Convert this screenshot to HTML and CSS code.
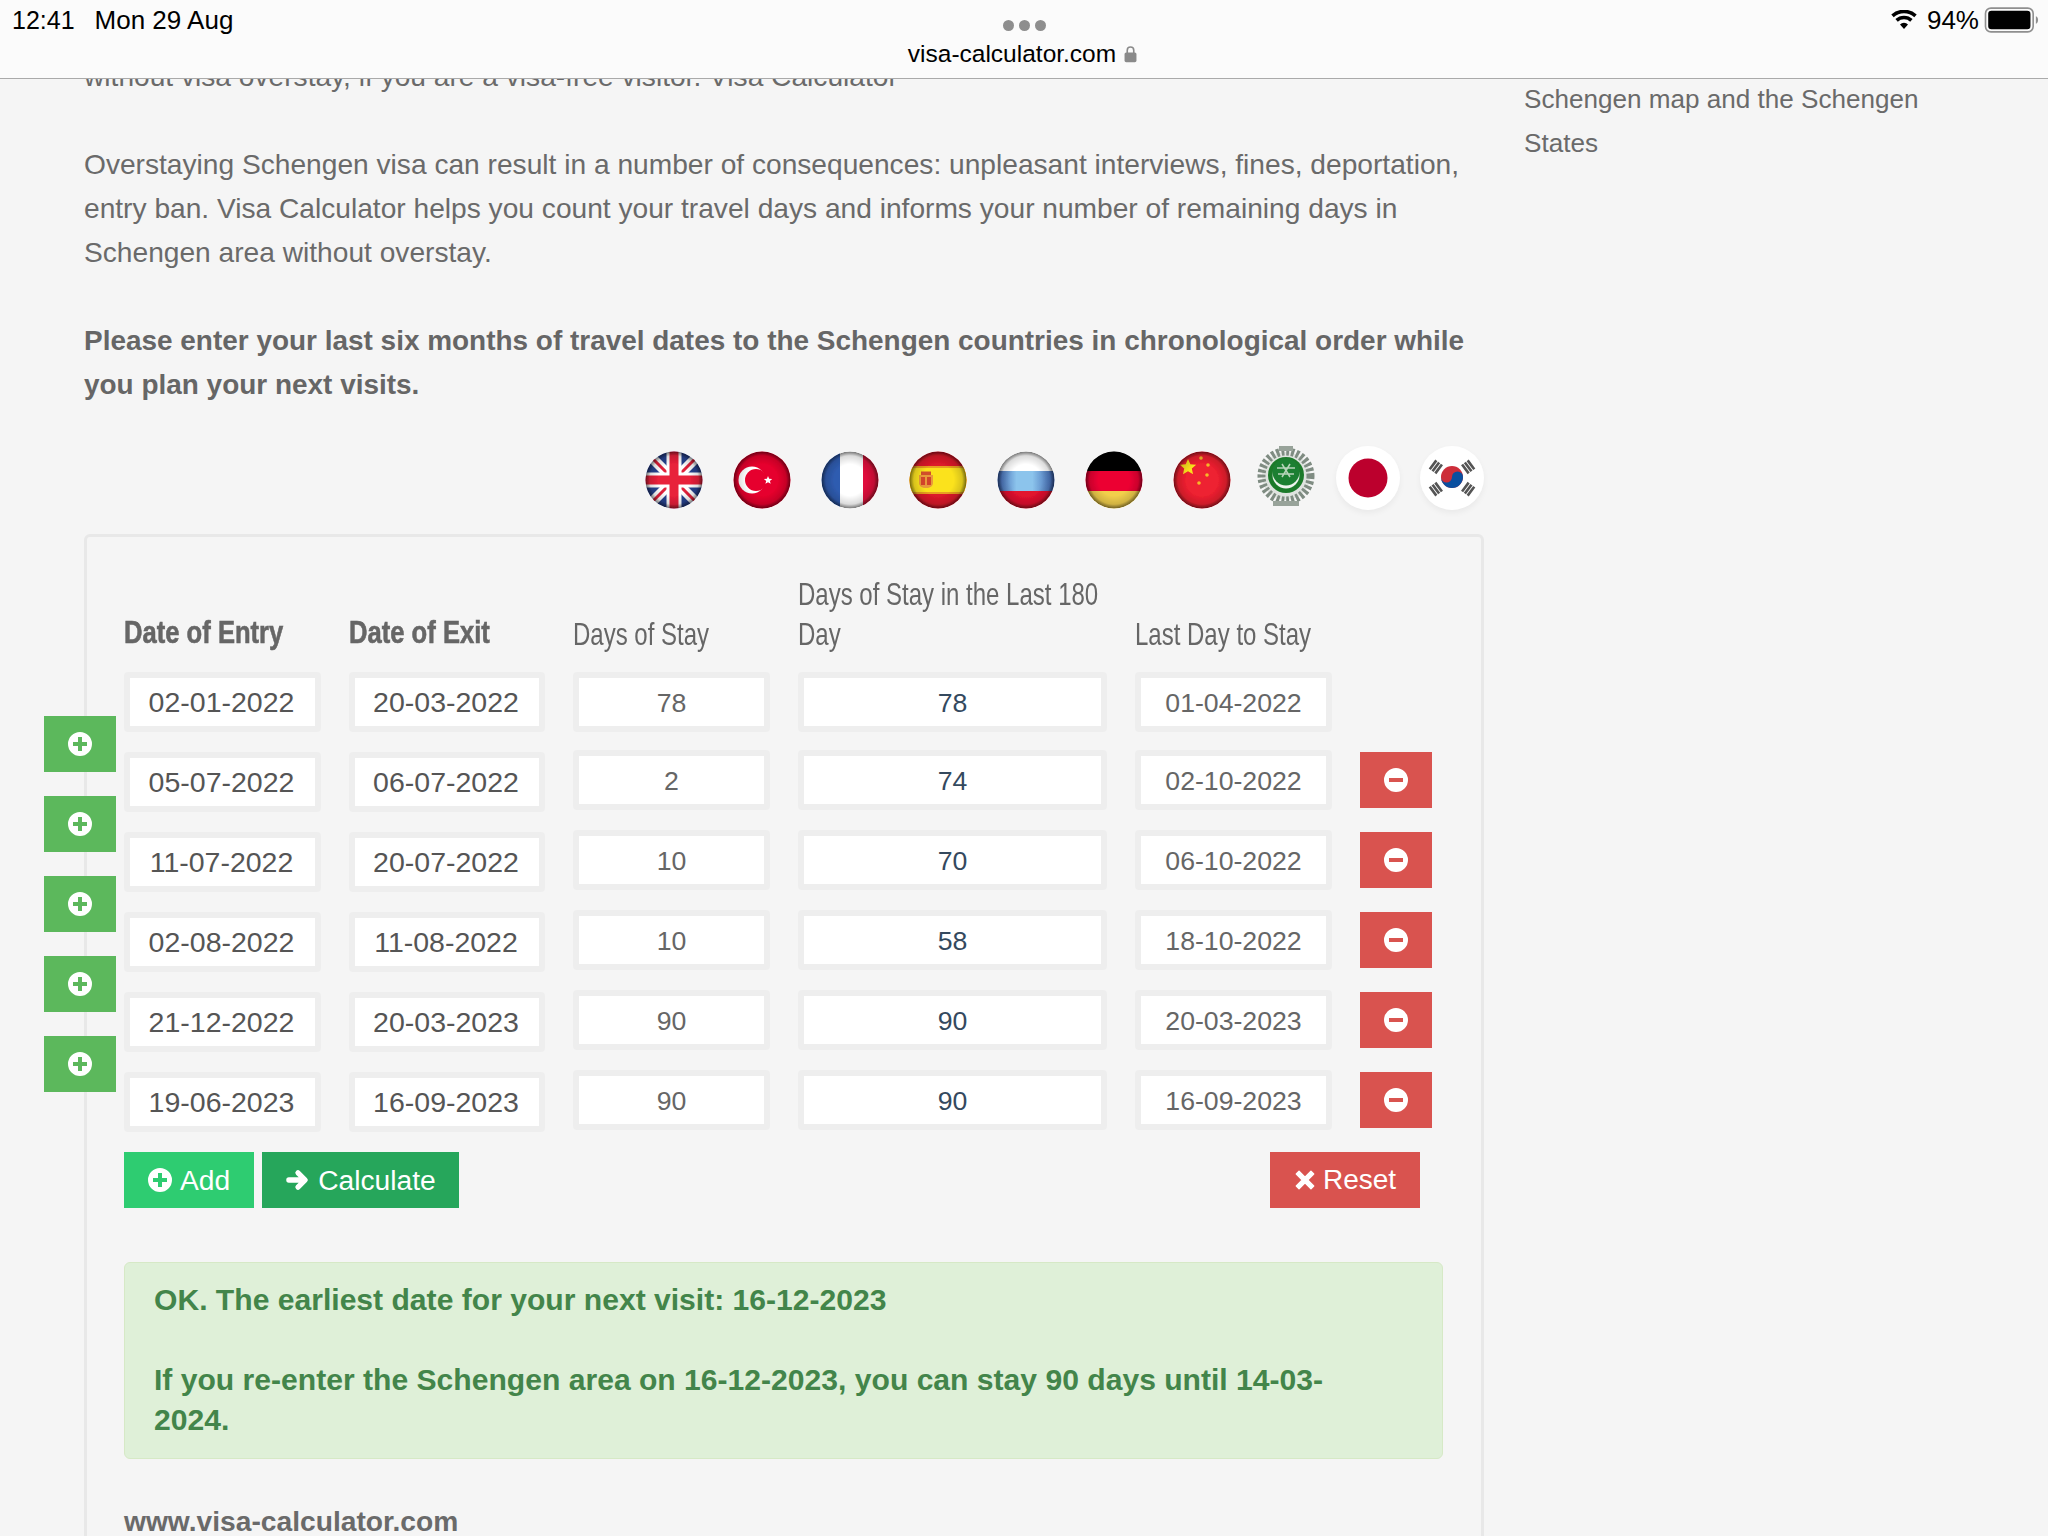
FILE: index.html
```html
<!DOCTYPE html>
<html lang="en">
<head>
<meta charset="utf-8">
<title>Visa Calculator</title>
<link rel="stylesheet" href="styles.css">
</head>
<body>
<svg class="defs" width="0" height="0" aria-hidden="true">
  <defs>
    <clipPath id="disc"><circle cx="32" cy="32" r="28.5"/></clipPath>
    <radialGradient id="shade" cx="50%" cy="50%" r="50%">
      <stop offset="0.55" stop-color="#000" stop-opacity="0"/>
      <stop offset="0.85" stop-color="#000" stop-opacity="0.14"/>
      <stop offset="1" stop-color="#000" stop-opacity="0.55"/>
    </radialGradient>
    <linearGradient id="ru-blue" x1="0" x2="1" y1="0" y2="0">
      <stop offset="0" stop-color="#2c4fa3"/><stop offset="0.35" stop-color="#8cc4ec"/><stop offset="0.6" stop-color="#8cc4ec"/><stop offset="1" stop-color="#2c4fa3"/>
    </linearGradient>
    <filter id="soft"><feGaussianBlur stdDeviation="0.45"/></filter>
    <symbol id="i-plus" viewBox="0 0 24 24"><path fill-rule="evenodd" d="M12 0a12 12 0 1 0 0 24a12 12 0 0 0 0-24zM10 5h4v5h5v4h-5v5h-4v-5H5v-4h5z"/></symbol>
    <symbol id="i-minus" viewBox="0 0 24 24"><path fill-rule="evenodd" d="M12 0a12 12 0 1 0 0 24a12 12 0 0 0 0-24zM5 10h14v4H5z"/></symbol>
  </defs>
</svg>

<header class="topbar">
  <div class="status-left"><span>12:41</span><span class="status-date">Mon 29 Aug</span></div>
  <div class="address">
    <div class="dots"><i></i><i></i><i></i></div>
    <div class="url">visa-calculator.com
      <svg class="lock" viewBox="0 0 12 16"><path d="M3 7V4.500a3 3 0 0 1 6 0V7" fill="none" stroke="#8a8a8a" stroke-width="1.500"/><rect x="0.500" y="6.500" width="11" height="9" rx="1.500" fill="#8a8a8a"/></svg>
    </div>
  </div>
  <div class="status-right">
    <svg class="wifi" viewBox="0 0 26 20"><path d="M13 19l-4-4.600a5.600 5.600 0 0 1 8 0zM6.800 11.800l-2.400-2.700a12.600 12.600 0 0 1 17.200 0l-2.400 2.700a9 9 0 0 0-12.400 0zM2.700 7.200L.3 4.500a19 19 0 0 1 25.400 0l-2.400 2.700a15.500 15.500 0 0 0-20.600 0z" fill="#000"/></svg>
    <span>94%</span>
    <svg class="battery" viewBox="0 0 50 24"><rect x="1" y="1" width="44" height="22" rx="5" fill="none" stroke="#8f8f8f" stroke-width="1.500"/><rect x="3.500" y="3.500" width="39" height="17" rx="3" fill="#000"/><path d="M47.500 8.500c1.500.5 2 2 2 3.500s-.5 3-2 3.500z" fill="#8f8f8f"/></svg>
  </div>
</header>

<div class="page">
  <main class="content">
    <p class="copy">without visa overstay, if you are a visa-free visitor. Visa Calculator<br><br>Overstaying Schengen visa can result in a number of consequences: unpleasant interviews, fines, deportation, entry ban. Visa Calculator helps you count your travel days and informs your number of remaining days in Schengen area without overstay.<br><br><strong>Please enter your last six months of travel dates to the Schengen countries in chronological order while you plan your next visits.</strong></p>

    <div class="flags">
      <svg class="flag" viewBox="0 0 64 64"><g filter="url(#soft)"><g clip-path="url(#disc)"><rect width="64" height="64" fill="#27428f"/><path d="M0 0L64 64M64 0L0 64" stroke="#fff" stroke-width="10"/><path d="M0 0L64 64M64 0L0 64" stroke="#e0203a" stroke-width="3"/><path d="M32 0V64M0 32H64" stroke="#fff" stroke-width="15"/><path d="M32 0V64M0 32H64" stroke="#e8203a" stroke-width="9"/><circle cx="32" cy="32" r="28.500" fill="url(#shade)"/></g></g></svg>
      <svg class="flag" viewBox="0 0 64 64"><g filter="url(#soft)"><g clip-path="url(#disc)"><rect width="64" height="64" fill="#e6002d"/><circle cx="22" cy="32" r="13.500" fill="#fff"/><circle cx="26" cy="32" r="11" fill="#e6002d"/><path d="M38 28l1.200 2.800 3 .2-2.300 1.900.8 2.900-2.700-1.600-2.600 1.600.8-2.900-2.300-1.900 3-.2z" fill="#fff"/><circle cx="32" cy="32" r="28.500" fill="url(#shade)"/></g></g></svg>
      <svg class="flag" viewBox="0 0 64 64"><g filter="url(#soft)"><g clip-path="url(#disc)"><rect width="64" height="64" fill="#fff"/><rect width="19" height="64" x="3" fill="#2f5cb0"/><rect width="22" height="64" x="45" fill="#e0113c"/><circle cx="32" cy="32" r="28.500" fill="url(#shade)"/></g></g></svg>
      <svg class="flag" viewBox="0 0 64 64"><g filter="url(#soft)"><g clip-path="url(#disc)"><rect width="64" height="64" fill="#dc1a2a"/><rect y="18" width="64" height="28" fill="#e8a020"/><rect y="20" width="64" height="24" fill="#fbe21f"/><path d="M13 27h14v8c0 3-3 5-7 5s-7-2-7-5z" fill="#e89a3a"/><rect x="15" y="23.500" width="10" height="3.500" fill="#d0502c"/><path d="M15 29h4v8h-4zM21 29h4v8h-4z" fill="#d2452c"/><circle cx="32" cy="32" r="28.500" fill="url(#shade)"/></g></g></svg>
      <svg class="flag" viewBox="0 0 64 64"><g filter="url(#soft)"><g clip-path="url(#disc)"><rect width="64" height="64" fill="#fff"/><rect y="23" width="64" height="20" fill="url(#ru-blue)"/><rect y="43" width="64" height="21" fill="#e2122f"/><circle cx="32" cy="32" r="28.500" fill="url(#shade)"/></g></g></svg>
      <svg class="flag" viewBox="0 0 64 64"><g filter="url(#soft)"><g clip-path="url(#disc)"><rect width="64" height="23" fill="#000"/><rect y="23" width="64" height="20" fill="#ec0033"/><rect y="43" width="64" height="21" fill="#f2cf4c"/><circle cx="32" cy="32" r="28.500" fill="url(#shade)"/></g></g></svg>
      <svg class="flag" viewBox="0 0 64 64"><g filter="url(#soft)"><g clip-path="url(#disc)"><rect width="64" height="64" fill="#ee2030"/><path d="M18 11l2.400 5.300 5.800.5-4.400 3.800 1.300 5.600-5.100-2.900-5 3 1.200-5.700-4.300-3.900 5.800-.5z" fill="#fbe21f"/><g fill="#f6b82a"><circle cx="31" cy="10" r="1.800"/><circle cx="38" cy="17" r="1.800"/><circle cx="37" cy="27" r="1.800"/><circle cx="29" cy="35" r="1.800"/></g><circle cx="32" cy="32" r="28.500" fill="url(#shade)"/></g></g></svg>
      <svg class="flag flag-arab" viewBox="0 0 60 60"><g filter="url(#soft)"><circle cx="30" cy="30" r="24" fill="#dfe3df"/><circle cx="30" cy="30" r="24.500" fill="none" stroke="#7f8c82" stroke-width="8" stroke-dasharray="3 2"/><rect x="23" y="0" width="14" height="5" fill="#98a39a"/><rect x="17" y="55" width="26" height="5" fill="#98a39a"/><circle cx="30" cy="29" r="18" fill="#1b7a2b"/><circle cx="30" cy="29" r="13.500" fill="#eef3ee"/><circle cx="30" cy="26" r="13.500" fill="#1f7f33"/><path d="M21 22h18M22 28h16M26 18l8 13M34 18l-8 13" stroke="#b7d4ba" stroke-width="1.500" fill="none"/></g></svg>
      <svg class="flag flag-plain" viewBox="0 0 64 64"><circle cx="32" cy="32" r="19.500" fill="#bc002d"/></svg>
      <svg class="flag flag-plain" viewBox="0 0 64 64"><circle cx="32" cy="31" r="11" fill="#cd2e3a"/><path d="M21 31a5.500 5.500 0 0 0 11 0a5.500 5.500 0 0 1 11 0a11 11 0 0 1-22 0z" fill="#0a4fa0"/><g stroke="#555" stroke-width="11" stroke-dasharray="2.600 .9" fill="none"><path d="M12 18L20 24"/><path d="M52 18L44 24"/><path d="M12 46L20 40"/><path d="M52 46L44 40"/></g></svg>
    </div>

    <section class="panel">
      <div class="side-adds">
        <button class="side-add"><svg class="icon"><use href="#i-plus"/></svg></button>
        <button class="side-add"><svg class="icon"><use href="#i-plus"/></svg></button>
        <button class="side-add"><svg class="icon"><use href="#i-plus"/></svg></button>
        <button class="side-add"><svg class="icon"><use href="#i-plus"/></svg></button>
        <button class="side-add"><svg class="icon"><use href="#i-plus"/></svg></button>
      </div>

      <div class="grid">
        <div class="th th-bold"><span>Date of Entry</span></div>
        <div class="th th-bold"><span>Date of Exit</span></div>
        <div class="th"><span>Days of Stay</span></div>
        <div class="th"><span>Days of Stay in the Last 180 Day</span></div>
        <div class="th"><span>Last Day to Stay</span></div>
        <div class="th"></div>

        <div class="cell first"><div class="field date">02-01-2022</div></div>
        <div class="cell first"><div class="field date">20-03-2022</div></div>
        <div class="cell first"><div class="field">78</div></div>
        <div class="cell first"><div class="field total">78</div></div>
        <div class="cell first"><div class="field">01-04-2022</div></div>
        <div class="cell first"></div>

        <div class="cell low"><div class="field date">05-07-2022</div></div>
        <div class="cell low"><div class="field date">06-07-2022</div></div>
        <div class="cell"><div class="field">2</div></div>
        <div class="cell"><div class="field total">74</div></div>
        <div class="cell"><div class="field">02-10-2022</div></div>
        <div class="cell low"><button class="remove"><svg class="icon"><use href="#i-minus"/></svg></button></div>

        <div class="cell low"><div class="field date">11-07-2022</div></div>
        <div class="cell low"><div class="field date">20-07-2022</div></div>
        <div class="cell"><div class="field">10</div></div>
        <div class="cell"><div class="field total">70</div></div>
        <div class="cell"><div class="field">06-10-2022</div></div>
        <div class="cell low"><button class="remove"><svg class="icon"><use href="#i-minus"/></svg></button></div>

        <div class="cell low"><div class="field date">02-08-2022</div></div>
        <div class="cell low"><div class="field date">11-08-2022</div></div>
        <div class="cell"><div class="field">10</div></div>
        <div class="cell"><div class="field total">58</div></div>
        <div class="cell"><div class="field">18-10-2022</div></div>
        <div class="cell low"><button class="remove"><svg class="icon"><use href="#i-minus"/></svg></button></div>

        <div class="cell low"><div class="field date">21-12-2022</div></div>
        <div class="cell low"><div class="field date">20-03-2023</div></div>
        <div class="cell"><div class="field">90</div></div>
        <div class="cell"><div class="field total">90</div></div>
        <div class="cell"><div class="field">20-03-2023</div></div>
        <div class="cell low"><button class="remove"><svg class="icon"><use href="#i-minus"/></svg></button></div>

        <div class="cell low"><div class="field date">19-06-2023</div></div>
        <div class="cell low"><div class="field date">16-09-2023</div></div>
        <div class="cell"><div class="field">90</div></div>
        <div class="cell"><div class="field total">90</div></div>
        <div class="cell"><div class="field">16-09-2023</div></div>
        <div class="cell low"><button class="remove"><svg class="icon"><use href="#i-minus"/></svg></button></div>
      </div>

      <div class="actions">
        <button class="btn btn-add"><svg class="icon"><use href="#i-plus"/></svg>Add</button>
        <button class="btn btn-calc"><svg class="icon icon-arrow" viewBox="0 0 24 24"><path d="M3 12H19M12.500 4.500L20 12l-7.500 7.500" fill="none" stroke="#fff" stroke-width="5.500" stroke-linecap="round" stroke-linejoin="round"/></svg>Calculate</button>
        <button class="btn btn-reset"><svg class="icon icon-x" viewBox="0 0 24 24"><path d="M5.500 2.500L12 9l6.500-6.500 3 3L15 12l6.500 6.500-3 3L12 15l-6.500 6.500-3-3L9 12 2.500 5.500z" stroke="#fff" stroke-width="1.500" stroke-linejoin="round"/></svg>Reset</button>
      </div>

      <div class="alert">OK. The earliest date for your next visit: 16-12-2023<br><br>If you re-enter the Schengen area on 16-12-2023, you can stay 90 days until 14-03-<br>2024.</div>

      <p class="site">www.visa-calculator.com</p>
    </section>
  </main>

  <aside class="sidebar">Schengen map and the Schengen States</aside>
</div>
</body>
</html>
```

FILE: styles.css
```css
* { box-sizing: border-box; }
html, body { margin: 0; height: 1536px; overflow: hidden; }
body { background: #f5f5f5; color: #6a6a6a; font-family: "Liberation Sans", Arial, sans-serif; font-size: 26.67px; line-height: 44px; position: relative; }
.defs { display: block; width: 0; height: 0; }

.topbar { position: absolute; left: 0; top: 0; width: 2048px; height: 79px; background: #fbfbfb; border-bottom: 1px solid #aaa; color: #000; z-index: 5; display: flex; justify-content: space-between; font-size: 25px; line-height: 30px; }
.status-left { display: flex; gap: 20px; padding: 5px 0 0 12px; }
.status-date { font-size: 26px; }
.status-right { display: flex; align-items: flex-start; padding: 5px 9px 0 0; gap: 5px; font-size: 26px; }
.address { position: absolute; left: 0; right: 0; top: 18px; display: flex; flex-direction: column; align-items: center; font-size: 24.5px; }
.dots { display: flex; gap: 5px; height: 18px; padding-top: 2px; }
.dots i { width: 11px; height: 11px; border-radius: 50%; background: #8e8e8e; display: block; }
.url { line-height: 36px; display: flex; align-items: center; gap: 8px; padding-right: 3px; }
.lock { width: 13px; height: 18px; }
.wifi { width: 26px; height: 20px; margin: 5px 5px 0 0; }
.battery { width: 55px; height: 26px; margin-top: 2px; }

.page { display: flex; padding-left: 84px; }
.content { width: 1400px; flex: none; padding-top: 55px; }
.copy { margin: 0; font-size: 28.15px; }
.copy strong { font-size: 27.95px; color: #666; }
.sidebar { width: 420px; margin: 77px 0 0 40px; font-size: 26.1px; }

.flags { display: flex; justify-content: flex-end; gap: 20px; margin-top: 39px; height: 88px; }
.flag { width: 64px; height: 64px; margin: 2px 4px 0 0; flex: none; }
.flag-arab { width: 60px; height: 60px; margin: 0 0 0 -2px; }
.flag-plain { background: #fff; border-radius: 50%; margin: 0; box-shadow: 0 3px 6px rgba(0,0,0,.05); }

.panel { position: relative; height: 1100px; border: 3px solid #e8e8e8; border-radius: 6px 6px 0 0; padding: 37px 38px 0 37px; }
.side-adds { position: absolute; left: -43px; top: 179px; display: flex; flex-direction: column; gap: 24px; }
.side-add { width: 72px; height: 56px; border: 0; padding: 0; background: #5cb85c; color: #fff; display: flex; align-items: center; justify-content: center; }
.icon { width: 24px; height: 24px; fill: currentColor; flex: none; }
.icon-arrow { width: 23px; }
.icon-x { width: 22px; height: 22px; }

.grid { display: grid; grid-template-columns: 197px 196px 197px 309px 197px 72px; column-gap: 28px; }
.th { font-size: 32px; line-height: 40px; color: #666; align-self: end; padding-bottom: 18px; }
.th span { display: block; width: 133.3%; transform: scaleX(.75); transform-origin: left center; }
.th-bold { font-weight: 700; padding-bottom: 20px; -webkit-text-stroke: .6px #666; }
.th-bold span { width: 125%; transform: scaleX(.8); }
.cell { height: 80px; }
.cell.first { height: 78px; }
.cell.low { padding-top: 2px; }
.field { height: 60px; border: 6px solid #eee; border-radius: 4px; background: #fff; background-clip: padding-box; text-align: center; line-height: 50px; font-size: 26.67px; color: #666; }
.date { font-size: 28.5px; color: #555; line-height: 48px; padding-right: 2px; }
.total { color: #34495e; }
.remove { width: 72px; height: 56px; border: 0; padding: 0; background: #d9534f; color: #fff; display: flex; align-items: center; justify-content: center; }

.actions { display: flex; gap: 8px; margin: 2px 23px 0 0; }
.btn { height: 56px; border: 0; padding: 0 24px; color: #fff; font: inherit; font-size: 28.2px; display: flex; align-items: center; gap: 8px; }
.btn-add { background: #2ecc71; }
.btn-calc { background: #26a65b; gap: 9px; padding-right: 23px; }
.btn-reset { background: #d9534f; margin-left: auto; width: 150px; padding: 0; justify-content: center; gap: 7px; font-size: 28px; }

.alert { margin-top: 54px; padding: 17px 29px 18px; border: 1px solid #d6e9c6; border-radius: 6px; background: #dff0d8; color: #43854a; font-weight: 700; font-size: 30.1px; line-height: 40px; }
.site { margin: 40px 0 0; font-weight: 700; font-size: 28.2px; }
```
